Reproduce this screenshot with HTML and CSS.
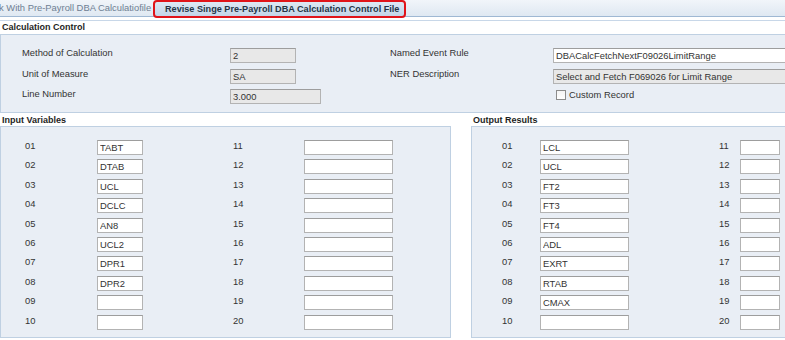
FILE: index.html
```html
<!DOCTYPE html>
<html lang="en">
<head>
<meta charset="UTF-8">
<title>Revise Singe Pre-Payroll DBA Calculation Control File</title>
<link rel="stylesheet" href="styles.css">
</head>
<body>
<div class="tabs">
    <div class="tab tab-off">k With Pre-Payroll DBA Calculatiofile</div>
    <div class="tab tab-on">Revise Singe Pre-Payroll DBA Calculation Control File</div>
</div>
<div class="rule"></div>

<h2 class="title">Calculation Control</h2>
<div class="panel calc">
    <span class="lbl">Method of Calculation</span>
    <input class="fld ro short" value="2" readonly>
    <span class="lbl">Named Event Rule</span>
    <input class="fld wide" value="DBACalcFetchNextF09026LimitRange">

    <span class="lbl">Unit of Measure</span>
    <input class="fld ro short" value="SA" readonly>
    <span class="lbl">NER Description</span>
    <input class="fld ro wide" value="Select and Fetch F069026 for Limit Range" readonly>

    <span class="lbl">Line Number</span>
    <input class="fld ro mid" value="3.000" readonly>
    <span></span>
    <label class="check"><input type="checkbox"> Custom Record</label>
</div>

<div class="vars">
    <div class="vars-in">
        <h2 class="title">Input Variables</h2>
        <div class="panel grid-in">
            <span class="num">01</span><input class="fld" value="TABT"><span class="num">11</span><input class="fld">
            <span class="num">02</span><input class="fld" value="DTAB"><span class="num">12</span><input class="fld">
            <span class="num">03</span><input class="fld" value="UCL"><span class="num">13</span><input class="fld">
            <span class="num">04</span><input class="fld" value="DCLC"><span class="num">14</span><input class="fld">
            <span class="num">05</span><input class="fld" value="AN8"><span class="num">15</span><input class="fld">
            <span class="num">06</span><input class="fld" value="UCL2"><span class="num">16</span><input class="fld">
            <span class="num">07</span><input class="fld" value="DPR1"><span class="num">17</span><input class="fld">
            <span class="num">08</span><input class="fld" value="DPR2"><span class="num">18</span><input class="fld">
            <span class="num">09</span><input class="fld"><span class="num">19</span><input class="fld">
            <span class="num">10</span><input class="fld"><span class="num">20</span><input class="fld">
        </div>
    </div>
    <div class="vars-out">
        <h2 class="title">Output Results</h2>
        <div class="panel grid-out">
            <span class="num">01</span><input class="fld" value="LCL"><span class="num">11</span><input class="fld">
            <span class="num">02</span><input class="fld" value="UCL"><span class="num">12</span><input class="fld">
            <span class="num">03</span><input class="fld" value="FT2"><span class="num">13</span><input class="fld">
            <span class="num">04</span><input class="fld" value="FT3"><span class="num">14</span><input class="fld">
            <span class="num">05</span><input class="fld" value="FT4"><span class="num">15</span><input class="fld">
            <span class="num">06</span><input class="fld" value="ADL"><span class="num">16</span><input class="fld">
            <span class="num">07</span><input class="fld" value="EXRT"><span class="num">17</span><input class="fld">
            <span class="num">08</span><input class="fld" value="RTAB"><span class="num">18</span><input class="fld">
            <span class="num">09</span><input class="fld" value="CMAX"><span class="num">19</span><input class="fld">
            <span class="num">10</span><input class="fld"><span class="num">20</span><input class="fld">
        </div>
    </div>
</div>
</body>
</html>
```

FILE: styles.css
```css
:root {
    /* colors */
    --text: #333333;
    --panel: #e9eef5;
    --panel-line: #bfd0e2;
    --tab-line: #9fb8d3;
    --field-line: #b3b3b3;
    --field-ro: #e8e8e8;
    --alert: #e0141a;
    /* fonts */
    --ui: "Liberation Sans", Arial, sans-serif;
}

body {
    margin: 0;
    font-family: var(--ui);
    font-size: 9.4px;
    color: var(--text);
    background-color: #ffffff;
    overflow: hidden;
}

/* tab strip */
.tabs {
    display: flex;
    align-items: flex-start;
    height: 16px;
    background: linear-gradient(#f1f5fa, #dfe8f2);
    border-bottom: 1px solid var(--tab-line);
}

.tab {
    height: 16px;
    line-height: 16px;
    white-space: nowrap;
    box-sizing: border-box;
}

.tab-off {
    width: 153px;
    overflow: hidden;
    color: #6f8093;
    text-indent: -1px;
}

.tab-on {
    height: 18px;
    line-height: 15px;
    padding: 0 5px 0 10px;
    font-weight: bold;
    font-size: 9.15px;
    color: #253446;
    background: linear-gradient(#dde8f4, #c3d5e8);
    border: 2px solid var(--alert);
    border-radius: 4px;
}

.rule {
    margin-top: 3px;
    border-top: 1px solid #c8d7e8;
}

.title {
    margin: 0;
    padding-left: 2px;
    height: 13px;
    line-height: 13px;
    font-size: 9px;
    font-weight: bold;
    color: #1e1e1e;
}

.panel {
    background-color: var(--panel);
    border: 1px solid var(--panel-line);
}

/* calculation control */
.calc {
    display: grid;
    grid-template-columns: 208px 160px 163px 1fr;
    grid-auto-rows: 20.5px;
    align-items: start;
    padding: 12px 0 0 21px;
    height: 65px;
    border-right: none;
    overflow: hidden;
}

.fld {
    display: block;
    box-sizing: border-box;
    height: 15px;
    margin: 0;
    padding: 0 2px;
    font-family: var(--ui);
    font-size: 9.4px;
    color: var(--text);
    background-color: #ffffff;
    border: 1px solid var(--field-line);
    border-top-color: #9d9d9d;
}

.calc .fld {
    margin-top: 1px;
}

.fld.ro {
    background-color: var(--field-ro);
}

.short { width: 66px; }
.mid { width: 91px; }
.calc .wide { width: 250px; }

.check {
    display: flex;
    align-items: center;
    gap: 3px;
    margin: 1px 0 0 3px;
    font-size: 9.4px;
}

.check input {
    margin: 0;
    width: 10px;
    height: 10px;
    appearance: none;
    background: linear-gradient(#f4f4f4, #ffffff);
    border: 1px solid #8c8c8c;
}

/* variables */
.vars {
    display: flex;
    gap: 20px;
    margin-top: 1px;
}

.vars-in {
    width: 451px;
    flex-shrink: 0;
}

.vars-out {
    flex: 1;
    min-width: 0;
}

.vars .title {
    height: 12px;
    line-height: 13px;
}

.grid-in,
.grid-out {
    display: grid;
    grid-auto-rows: 19.4px;
    align-items: start;
    height: 197px;
    padding-top: 13px;
    box-sizing: content-box;
}

.grid-in {
    grid-template-columns: 72px 136px 71px 89px;
    padding-left: 24px;
}

.grid-in .fld {
    width: 46px;
}

.grid-in .fld:nth-of-type(2n) {
    width: 89px;
}

.grid-out {
    grid-template-columns: 38px 89px 90px 21px 40px;
    padding-left: 30px;
    border-right: none;
    overflow: hidden;
}

.grid-out .num:nth-of-type(2n) {
    grid-column: 4;
}

.num {
    line-height: 11px;
}
```
